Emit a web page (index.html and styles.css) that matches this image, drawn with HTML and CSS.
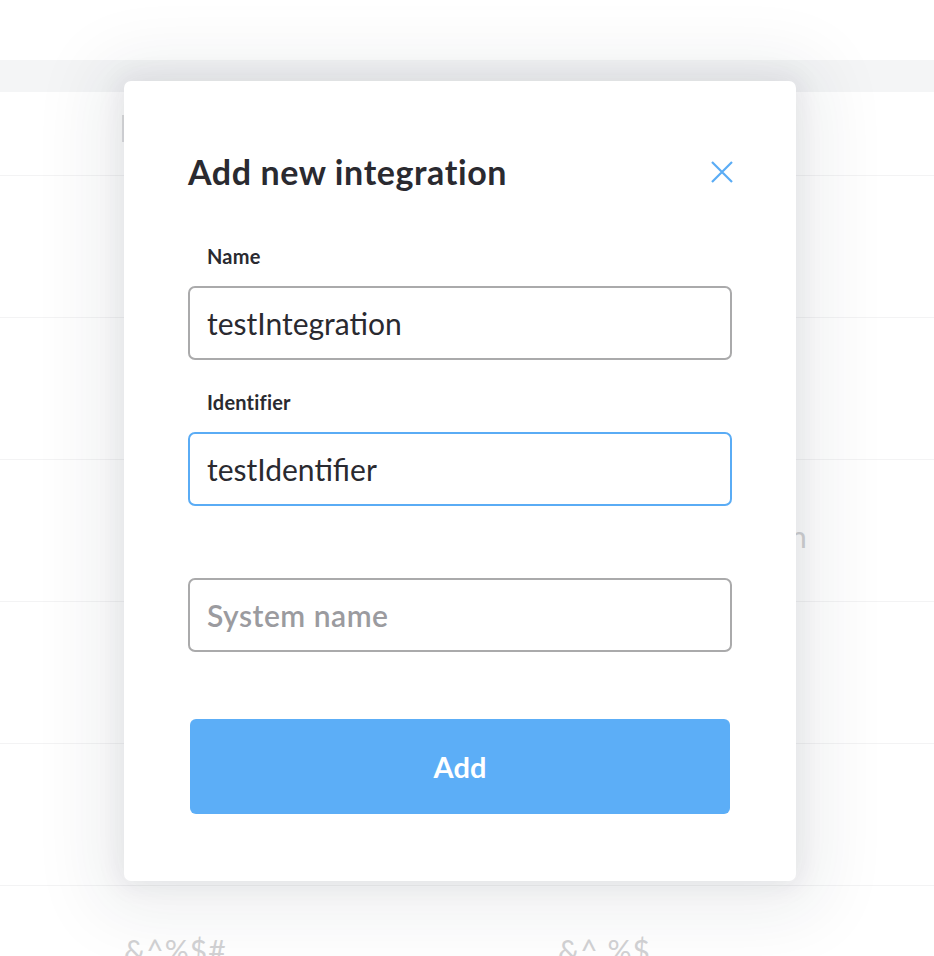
FILE: index.html
```html
<!DOCTYPE html>
<html lang="en">
<head>
<meta charset="utf-8">
<title>Add new integration</title>
<link rel="stylesheet" href="styles.css">
</head>
<body>
<div class="page">
  <div class="topbar"></div>
  <div class="band"></div>
  <div class="table">
    <div class="row row-first"><span class="ghost-bar"></span></div>
    <div class="row"></div>
    <div class="row"></div>
    <div class="row"><span class="ghost ghost-n">n</span></div>
    <div class="row"></div>
    <div class="row"></div>
    <div class="row row-last">
      <span class="ghost ghost-a">&amp;^%$#</span>
      <span class="ghost ghost-b">&amp;^ %$</span>
    </div>
  </div>

  <div class="modal">
    <div class="modal-head">
      <h2 class="modal-title">Add new integration</h2>
      <button class="close" aria-label="Close">
        <svg width="22" height="22" viewBox="0 0 22 22"><path d="M1 1L21 21M21 1L1 21" stroke="#5aacf5" stroke-width="2.2" fill="none"/></svg>
      </button>
    </div>
    <div class="field field-first">
      <label class="label">Name</label>
      <div class="input">testIntegration</div>
    </div>
    <div class="field">
      <label class="label">Identifier</label>
      <div class="input input-focus">testIdentifier</div>
    </div>
    <div class="field">
      <label class="label"></label>
      <div class="input input-empty">System name</div>
    </div>
    <button class="btn">Add</button>
  </div>
</div>
</body>
</html>
```

FILE: styles.css
```css
* { box-sizing: border-box; }
html, body { margin: 0; padding: 0; background: #fff; }
body {
  font-family: "Lato", "Noto Sans", sans-serif;
  color: #2a2a30;
}
.page { position: relative; width: 934px; height: 956px; overflow: hidden; }
.topbar { height: 60px; background: #fff; }
.band { height: 32px; background: #f4f5f6; }
.table { display: flex; flex-direction: column; }
.row { height: 142px; border-bottom: 1px solid #f3f3f4; position: relative; display: flex; flex-shrink: 0; }
.row-first { height: 84px; }
.row-last { border-bottom: none; height: 80px; padding-top: 46px; }
.ghost { color: #d2d2d4; font-size: 30px; line-height: 36px; letter-spacing: 1px; }
.ghost-bar { display: block; width: 2px; height: 27px; background: #dedee0; margin: 23px 0 0 122px; }
.ghost-n { margin: 58px 0 0 790px; letter-spacing: 0; }
.ghost-a { margin-left: 124px; }
.ghost-b { margin-left: 558px; position: absolute; }
.modal {
  position: absolute;
  left: 124px; top: 81px;
  width: 672px; height: 800px;
  background: #fff;
  border-radius: 7px;
  padding: 71px 64px 67px 64px;
  box-shadow: 0 6px 70px 26px rgba(30, 40, 60, 0.075), 0 0 24px 6px rgba(30, 40, 60, 0.06);
  display: flex; flex-direction: column;
}
.modal-head { display: flex; align-items: center; justify-content: space-between; height: 40px; }
.modal-title { margin: 0; font-size: 34px; line-height: 40px; font-weight: 700; color: #2a2a30; letter-spacing: 0.6px; }
.close { border: 0; background: none; padding: 0; width: 22px; height: 22px; display: flex; margin-right: -1px; }
.field { display: flex; flex-direction: column; }
.field-first { margin-top: 52px; }
.field + .field { margin-top: 30px; }
.label { display: block; height: 24px; line-height: 24px; font-size: 20px; font-weight: 700; padding-left: 19px; margin-bottom: 18px; color: #2a2a30; letter-spacing: 0.2px; }
.input {
  height: 74px;
  border: 2px solid #aaaaab;
  border-radius: 7px;
  padding: 0 17px;
  display: flex; align-items: center;
  font-size: 30px;
  color: #2a2a30;
}
.input-focus { border-color: #5aacf5; }
.input-empty { color: #9b9b9f; font-weight: 600; letter-spacing: 0.5px; }
.btn {
  margin: 67px 2px 0 2px;
  height: 95px;
  border: 0;
  border-radius: 6px;
  background: #5caef7;
  color: #fff;
  font-family: inherit;
  font-size: 29px;
  font-weight: 700;
}
```
